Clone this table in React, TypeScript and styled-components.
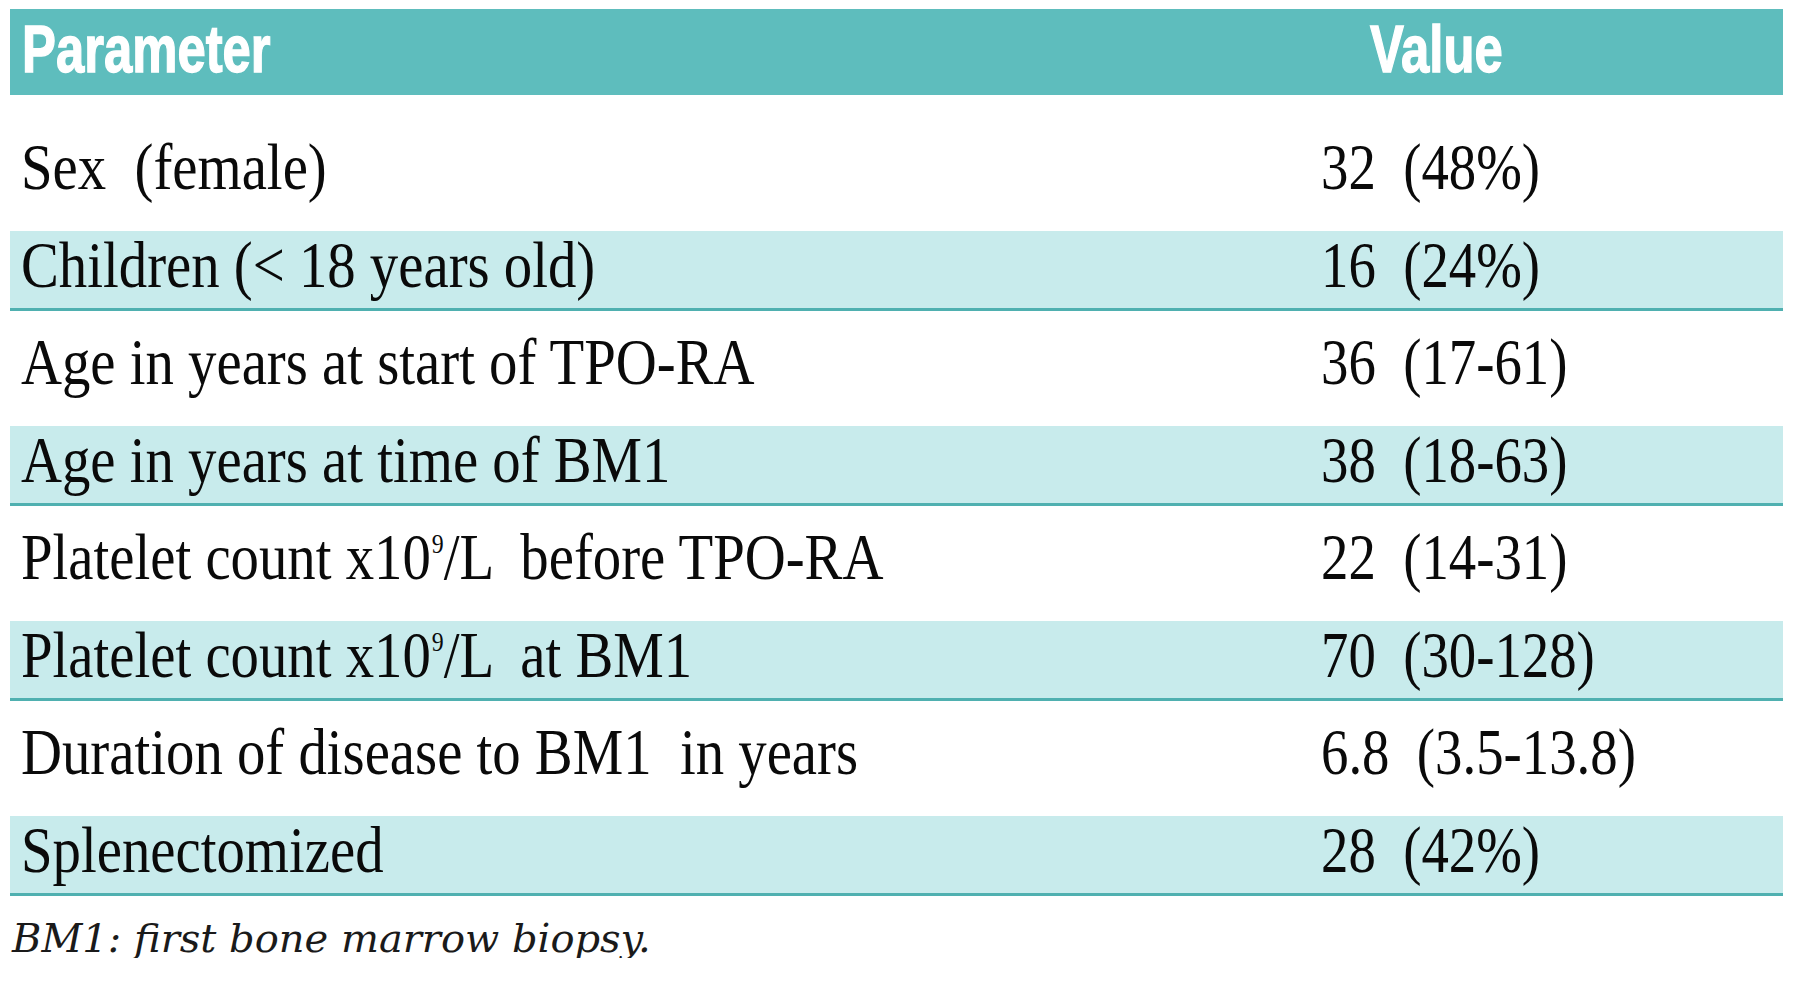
import React from "react";
import styled, { createGlobalStyle } from "styled-components";

const GlobalStyle = createGlobalStyle`
  html, body {
    margin: 0;
    padding: 0;
    background: #ffffff;
  }
  body {
    font-family: "Liberation Serif", "Times New Roman", serif;
    color: #0a0a0a;
  }
`;

const Page = styled.div`
  width: 1800px;
  padding: 9px 17px 0 10px;
  box-sizing: border-box;
`;

const Table = styled.div`
  display: flex;
  flex-direction: column;
  width: 100%;
`;

const HeaderRow = styled.div`
  display: grid;
  grid-template-columns: 1300px 1fr;
  height: 86px;
  background: #5ebdbd;
  margin-bottom: 21px;
`;

const HeadCell = styled.div<{ $indent: number }>`
  padding-left: ${(p) => p.$indent}px;
  font-family: "Liberation Sans", Arial, sans-serif;
  font-weight: 700;
  font-size: 66px;
  line-height: 80px;
  color: #ffffff;
  -webkit-text-stroke: 1.4px #ffffff;
`;

const Squeeze = styled.span<{ $scale: number }>`
  display: inline-block;
  white-space: pre;
  transform: scaleX(${(p) => p.$scale});
  transform-origin: 0 50%;
`;

const Row = styled.div<{ $shaded: boolean }>`
  display: grid;
  grid-template-columns: 1300px 1fr;
  box-sizing: content-box;
  height: ${(p) => (p.$shaded ? 77 : 115)}px;
  background: ${(p) => (p.$shaded ? "#c8ebec" : "#ffffff")};
  border-bottom: ${(p) => (p.$shaded ? "3px solid #4fb0b0" : "0")};
`;

const Cell = styled.div<{ $shaded: boolean }>`
  padding-left: 11px;
  padding-top: ${(p) => (p.$shaded ? 3 : 20)}px;
  font-size: 66px;
  line-height: 62px;
`;

const Sup = styled.sup`
  font-size: 0.42em;
  vertical-align: 0.95em;
  line-height: 0;
  margin-left: 1px;
`;

const Footnote = styled.div`
  margin-top: 22px;
  padding-left: 2px;
  font-family: "DejaVu Serif", "Liberation Serif", serif;
  font-style: italic;
  font-size: 40px;
  line-height: 40px;
  color: #1a1a1a;
`;

type RowData = { label: React.ReactNode; value: string };

const rows: RowData[] = [
  { label: "Sex  (female)", value: "32  (48%)" },
  { label: "Children (< 18 years old)", value: "16  (24%)" },
  { label: "Age in years at start of TPO-RA", value: "36  (17-61)" },
  { label: "Age in years at time of BM1", value: "38  (18-63)" },
  {
    label: (
      <>
        Platelet count x10<Sup>9</Sup>/L  before TPO-RA
      </>
    ),
    value: "22  (14-31)",
  },
  {
    label: (
      <>
        Platelet count x10<Sup>9</Sup>/L  at BM1
      </>
    ),
    value: "70  (30-128)",
  },
  { label: "Duration of disease to BM1  in years", value: "6.8  (3.5-13.8)" },
  { label: "Splenectomized", value: "28  (42%)" },
];

export default function App() {
  return (
    <>
      <GlobalStyle />
      <Page>
        <Table>
          <HeaderRow>
            <HeadCell $indent={12}>
              <Squeeze $scale={0.77}>Parameter</Squeeze>
            </HeadCell>
            <HeadCell $indent={60}>
              <Squeeze $scale={0.77}>Value</Squeeze>
            </HeadCell>
          </HeaderRow>
          {rows.map((r, i) => {
            const shaded = i % 2 === 1;
            return (
              <Row key={i} $shaded={shaded}>
                <Cell $shaded={shaded}>
                  <Squeeze $scale={0.86}>{r.label}</Squeeze>
                </Cell>
                <Cell $shaded={shaded}>
                  <Squeeze $scale={0.83}>{r.value}</Squeeze>
                </Cell>
              </Row>
            );
          })}
        </Table>
        <Footnote>BM1: first bone marrow biopsy.</Footnote>
      </Page>
    </>
  );
}
